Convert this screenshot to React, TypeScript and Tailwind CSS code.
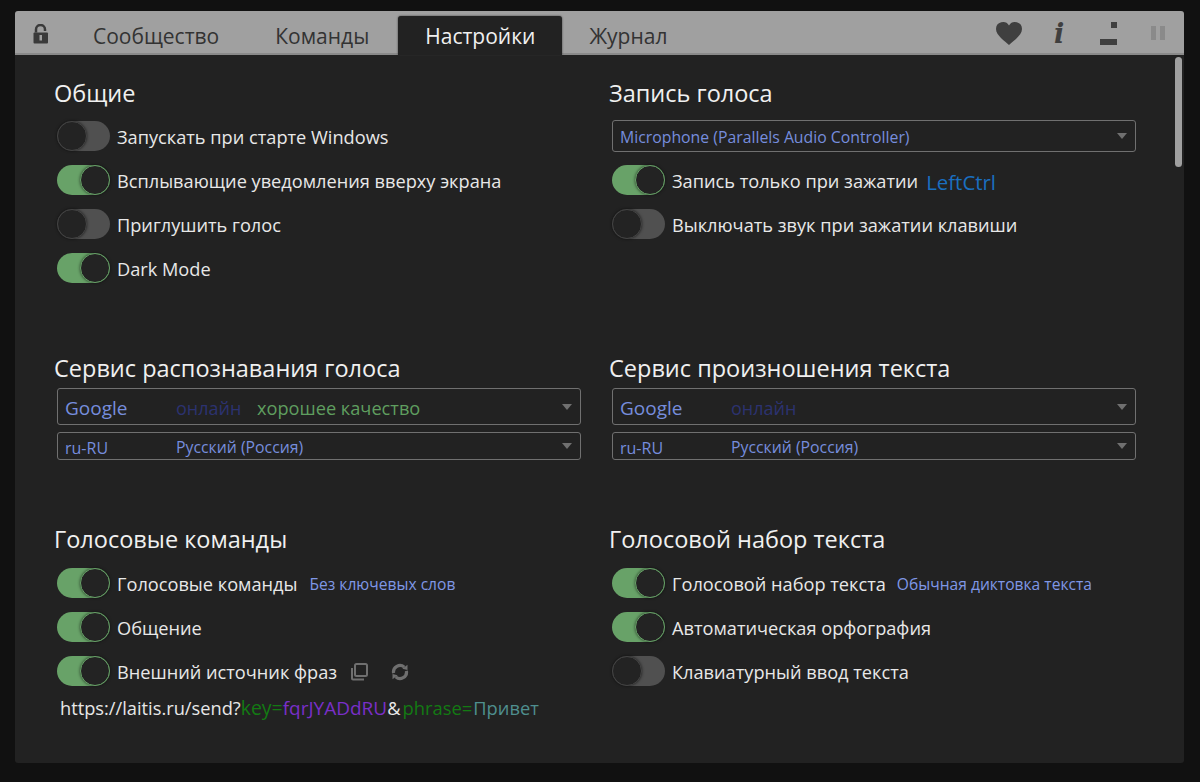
import React from 'react';

const Toggle = ({ on }: { on?: boolean }) => (
  <span className={`relative mt-[5px] block h-[30px] w-[53px] shrink-0 rounded-full ${on ? 'bg-[#68a268]' : 'bg-[#505050]'}`}>
    <span
      className={`absolute top-0 h-[30px] w-[30px] rounded-full bg-[#232323] border shadow-[0_0_3px_rgba(0,0,0,0.6)] ${
        on ? 'right-0 border-[#68a268]' : 'left-0 border-[#444444]'
      }`}
    />
  </span>
);

const Heading = ({ children }: { children: React.ReactNode }) => (
  <h2 className="h-[30px] text-[23.5px] leading-[30px] text-[#f0f0f0]">{children}</h2>
);

const Row = ({ on, label, children }: { on?: boolean; label: string; children?: React.ReactNode }) => (
  <div className="flex h-[44px] items-start pl-[3px]">
    <Toggle on={on} />
    <div className="ml-[7px] mt-[7px] flex h-[30px] items-center">
      <span className="text-[18.2px] text-[#e8e8e8]">{label}</span>
      {children}
    </div>
  </div>
);

const Arrow = () => (
  <span className="absolute right-[8px] top-1/2 h-0 w-0 -translate-y-1/2 border-x-[5px] border-t-[6px] border-x-transparent border-t-[#707070]" />
);

const Select = ({ big, first, second, extra }: { big?: boolean; first: string; second: string; extra?: string }) => (
  <div
    className={`relative ml-[3px] flex w-[524px] items-center rounded-[3px] border border-[#707070] px-[7px] pt-[4px] ${
      big ? 'h-[37px] text-[19px]' : 'h-[28px] text-[16px]'
    }`}
  >
    <span className="w-[111px] text-[#768ddd]">{first}</span>
    {big ? (
      <span className="w-[81px] text-[18px] text-[#2c3270]">{second}</span>
    ) : (
      <span className="text-[15.8px] text-[#768ddd]">{second}</span>
    )}
    {extra && <span className="text-[18.2px] text-[#5f9e5f]">{extra}</span>}
    <Arrow />
  </div>
);

const LockIcon = () => (
  <svg width="16" height="20" viewBox="0 0 16 20" fill="#3a3a3a">
    <path d="M3 8.500V5.500a4.500 4.500 0 0 1 9 0v1.500" fill="none" stroke="#3a3a3a" strokeWidth="2.500" />
    <rect x="0.500" y="8.500" width="14.500" height="11" rx="1" />
    <rect x="6.500" y="11" width="2.500" height="5.500" fill="#a0a0a0" />
  </svg>
);

const HeartIcon = () => (
  <svg width="26" height="23" viewBox="0 0 26 23" fill="#3f3f3f">
    <path d="M13 23C9 19 0 13.500 0 7a7 7 0 0 1 13-3.500A7 7 0 0 1 26 7c0 6.500-9 12-13 16z" />
  </svg>
);

const CopyIcon = () => (
  <svg width="18" height="18" viewBox="0 0 18 18" fill="none" stroke="#6f6f6f" strokeWidth="2">
    <rect x="5" y="1" width="12" height="12" rx="1.500" />
    <path d="M2 5v10.500a1 1 0 0 0 1 1h11" />
  </svg>
);

const SyncIcon = () => (
  <svg width="18" height="18" viewBox="0 0 18 18" fill="none" stroke="#6f6f6f" strokeWidth="3.200">
    <path d="M2.600 10.100A6.500 6.500 0 0 1 13.300 4.100" />
    <path d="M15.400 7.900A6.500 6.500 0 0 1 4.700 13.900" />
    <path d="M16.500 1.800v5.200l-5.200-1.200z" fill="#6f6f6f" stroke="none" />
    <path d="M1.500 16.200v-5.200l5.200 1.200z" fill="#6f6f6f" stroke="none" />
  </svg>
);

const Tab = ({ label, active }: { label: string; active?: boolean }) => (
  <div
    className={`mt-[5px] flex h-[39px] items-center justify-center px-[27px] pt-[3px] text-[21px] ${
      active ? 'rounded-t-[3px] bg-[#222222] text-[#f0f0f0] shadow-[0_0_2px_#333333]' : 'text-[#333333]'
    }`}
  >
    {label}
  </div>
);

export default function App() {
  return (
    <div
      className="h-[782px] w-[1200px] overflow-hidden bg-[#111111] px-[15px] pt-[11px]"
      style={{ fontFamily: '"Open Sans", "Noto Sans", sans-serif' }}
    >
      <div className="relative h-[752px] w-[1169px] overflow-hidden rounded-[3px] bg-[#222222]">
        <div className="flex h-[44px] items-start border-b-2 border-[#8a8a8a] bg-[#a0a0a0]">
          <div className="ml-[18px] mt-[13px] w-[33px]">
            <LockIcon />
          </div>
          <div className="flex gap-[2px]">
            <Tab label="Сообщество" />
            <Tab label="Команды" />
            <Tab active label="Настройки" />
          </div>
          <Tab label="Журнал" />
          <div className="ml-auto mt-[11px] flex items-start">
            <HeartIcon />
            <span
              className="ml-[32px] w-[10px] text-[27px] font-bold italic leading-[24px] text-[#3f3f3f]"
              style={{ fontFamily: '"DejaVu Serif", serif' }}
            >
              i
            </span>
            <div className="relative ml-[36px] h-[23px] w-[17px]">
              <span className="absolute right-0 top-0 h-[6px] w-[6px] bg-[#3f3f3f]" />
              <span className="absolute bottom-0 left-0 h-[6px] w-[17px] bg-[#3f3f3f]" />
            </div>
            <div className="ml-[34px] mr-[19px] mt-[4px] flex gap-[4px]">
              <span className="h-[14px] w-[5px] bg-[#8a8a8a]" />
              <span className="h-[14px] w-[5px] bg-[#8a8a8a]" />
            </div>
          </div>
        </div>

        <div className="absolute right-[2px] top-[46px] h-[110px] w-[7px] rounded-full bg-[#a0a0a0]" />

        <div className="grid grid-cols-[555px_555px] grid-rows-[275px_171px_auto] pl-[39px] pt-[23px]">
          <section>
            <Heading>Общие</Heading>
            <div className="mt-[8px]">
              <Row label="Запускать при старте Windows" />
              <Row on label="Всплывающие уведомления вверху экрана" />
              <Row label="Приглушить голос" />
              <Row on label="Dark Mode" />
            </div>
          </section>
          <section>
            <Heading>Запись голоса</Heading>
            <div className="mt-[12px]">
              <div className="relative ml-[3px] flex h-[32px] w-[524px] items-center rounded-[3px] border border-[#707070] px-[7px] pt-[3px] text-[15.8px] text-[#768ddd]">
                Microphone (Parallels Audio Controller)
                <Arrow />
              </div>
              <div className="mt-[8px]">
                <Row on label="Запись только при зажатии">
                  <span className="ml-[8px] text-[20.4px] text-[#1a6fc0]">LeftCtrl</span>
                </Row>
                <Row label="Выключать звук при зажатии клавиши" />
              </div>
            </div>
          </section>

          <section>
            <Heading>Сервис распознавания голоса</Heading>
            <div className="mt-[5px] flex flex-col gap-[7px]">
              <Select big first="Google" second="онлайн" extra="хорошее качество" />
              <Select first="ru-RU" second="Русский (Россия)" />
            </div>
          </section>
          <section>
            <Heading>Сервис произношения текста</Heading>
            <div className="mt-[5px] flex flex-col gap-[7px]">
              <Select big first="Google" second="онлайн" />
              <Select first="ru-RU" second="Русский (Россия)" />
            </div>
          </section>

          <section>
            <Heading>Голосовые команды</Heading>
            <div className="mt-[9px]">
              <Row on label="Голосовые команды">
                <span className="ml-[12px] text-[15.6px] text-[#7f97e6]">Без ключевых слов</span>
              </Row>
              <Row on label="Общение" />
              <Row on label="Внешний источник фраз">
                <span className="mb-[3px] ml-[13px]"><CopyIcon /></span>
                <span className="mb-[3px] ml-[23px]"><SyncIcon /></span>
              </Row>
            </div>
            <div className="ml-[6px] text-[18.25px] leading-[26px] text-[#e8e8e8]">
              https://laitis.ru/send?<span className="text-[19.4px] text-[#137a13]">key=</span>
              <span className="text-[19px] text-[#7a2fc8]">fqrJYADdRU</span>&amp;
              <span className="ml-[2px] text-[18.4px] text-[#137a13]">phrase=</span>
              <span className="ml-[1px] text-[18.3px] text-[#4f8f8f]">Привет</span>
            </div>
          </section>
          <section>
            <Heading>Голосовой набор текста</Heading>
            <div className="mt-[9px]">
              <Row on label="Голосовой набор текста">
                <span className="ml-[11px] text-[15.6px] text-[#7f97e6]">Обычная диктовка текста</span>
              </Row>
              <Row on label="Автоматическая орфография" />
              <Row label="Клавиатурный ввод текста" />
            </div>
          </section>
        </div>
      </div>
    </div>
  );
}
